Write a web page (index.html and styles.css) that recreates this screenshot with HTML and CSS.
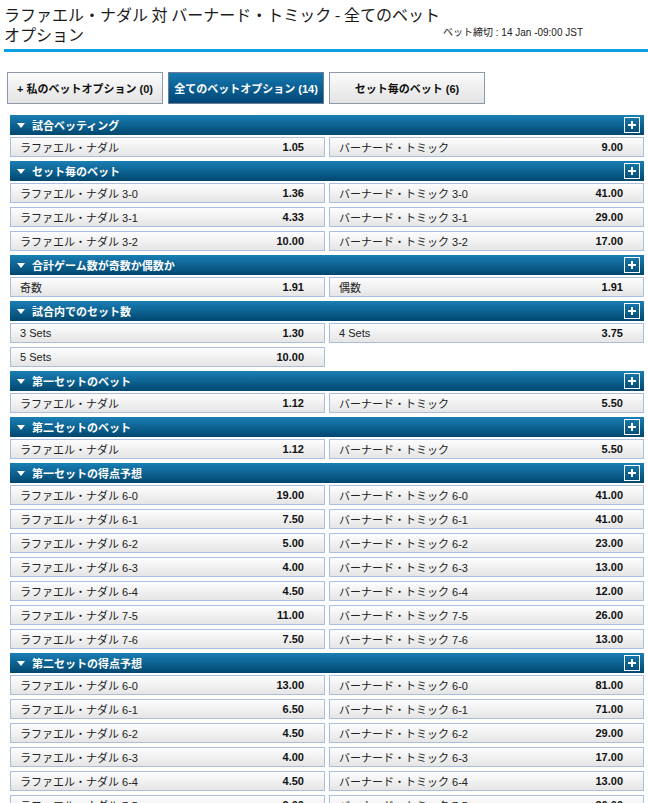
FILE: index.html
```html
<!DOCTYPE html>
<html lang="ja">
<head>
<meta charset="utf-8">
<title>ラファエル・ナダル 対 バーナード・トミック</title>
<link rel="stylesheet" href="styles.css">
</head>
<body>
<div class="titlebar">
  <h1 class="title">ラファエル・ナダル 対 バーナード・トミック - 全てのベットオプション</h1>
  <div class="deadline">ベット締切 : 14 Jan -09:00 JST</div>
</div>

<div class="tabs">
  <div class="tab">+ 私のベットオプション (0)</div>
  <div class="tab active">全てのベットオプション (14)</div>
  <div class="tab">セット毎のベット (6)</div>
</div>

<div class="markets">
  <div class="market">
    <div class="mhead"><span class="tri"></span><span class="mname">試合ベッティング</span><span class="plus"></span></div>
    <div class="grid">
      <div class="cell"><span>ラファエル・ナダル</span><b>1.05</b></div>
      <div class="cell"><span>バーナード・トミック</span><b>9.00</b></div>
    </div>
  </div>

  <div class="market">
    <div class="mhead"><span class="tri"></span><span class="mname">セット毎のベット</span><span class="plus"></span></div>
    <div class="grid">
      <div class="cell"><span>ラファエル・ナダル 3-0</span><b>1.36</b></div>
      <div class="cell"><span>バーナード・トミック 3-0</span><b>41.00</b></div>
      <div class="cell"><span>ラファエル・ナダル 3-1</span><b>4.33</b></div>
      <div class="cell"><span>バーナード・トミック 3-1</span><b>29.00</b></div>
      <div class="cell"><span>ラファエル・ナダル 3-2</span><b>10.00</b></div>
      <div class="cell"><span>バーナード・トミック 3-2</span><b>17.00</b></div>
    </div>
  </div>

  <div class="market">
    <div class="mhead"><span class="tri"></span><span class="mname">合計ゲーム数が奇数か偶数か</span><span class="plus"></span></div>
    <div class="grid">
      <div class="cell"><span>奇数</span><b>1.91</b></div>
      <div class="cell"><span>偶数</span><b>1.91</b></div>
    </div>
  </div>

  <div class="market">
    <div class="mhead"><span class="tri"></span><span class="mname">試合内でのセット数</span><span class="plus"></span></div>
    <div class="grid">
      <div class="cell"><span>3 Sets</span><b>1.30</b></div>
      <div class="cell"><span>4 Sets</span><b>3.75</b></div>
      <div class="cell"><span>5 Sets</span><b>10.00</b></div>
    </div>
  </div>

  <div class="market">
    <div class="mhead"><span class="tri"></span><span class="mname">第一セットのベット</span><span class="plus"></span></div>
    <div class="grid">
      <div class="cell"><span>ラファエル・ナダル</span><b>1.12</b></div>
      <div class="cell"><span>バーナード・トミック</span><b>5.50</b></div>
    </div>
  </div>

  <div class="market">
    <div class="mhead"><span class="tri"></span><span class="mname">第二セットのベット</span><span class="plus"></span></div>
    <div class="grid">
      <div class="cell"><span>ラファエル・ナダル</span><b>1.12</b></div>
      <div class="cell"><span>バーナード・トミック</span><b>5.50</b></div>
    </div>
  </div>

  <div class="market">
    <div class="mhead"><span class="tri"></span><span class="mname">第一セットの得点予想</span><span class="plus"></span></div>
    <div class="grid">
      <div class="cell"><span>ラファエル・ナダル 6-0</span><b>19.00</b></div>
      <div class="cell"><span>バーナード・トミック 6-0</span><b>41.00</b></div>
      <div class="cell"><span>ラファエル・ナダル 6-1</span><b>7.50</b></div>
      <div class="cell"><span>バーナード・トミック 6-1</span><b>41.00</b></div>
      <div class="cell"><span>ラファエル・ナダル 6-2</span><b>5.00</b></div>
      <div class="cell"><span>バーナード・トミック 6-2</span><b>23.00</b></div>
      <div class="cell"><span>ラファエル・ナダル 6-3</span><b>4.00</b></div>
      <div class="cell"><span>バーナード・トミック 6-3</span><b>13.00</b></div>
      <div class="cell"><span>ラファエル・ナダル 6-4</span><b>4.50</b></div>
      <div class="cell"><span>バーナード・トミック 6-4</span><b>12.00</b></div>
      <div class="cell"><span>ラファエル・ナダル 7-5</span><b>11.00</b></div>
      <div class="cell"><span>バーナード・トミック 7-5</span><b>26.00</b></div>
      <div class="cell"><span>ラファエル・ナダル 7-6</span><b>7.50</b></div>
      <div class="cell"><span>バーナード・トミック 7-6</span><b>13.00</b></div>
    </div>
  </div>

  <div class="market">
    <div class="mhead"><span class="tri"></span><span class="mname">第二セットの得点予想</span><span class="plus"></span></div>
    <div class="grid">
      <div class="cell"><span>ラファエル・ナダル 6-0</span><b>13.00</b></div>
      <div class="cell"><span>バーナード・トミック 6-0</span><b>81.00</b></div>
      <div class="cell"><span>ラファエル・ナダル 6-1</span><b>6.50</b></div>
      <div class="cell"><span>バーナード・トミック 6-1</span><b>71.00</b></div>
      <div class="cell"><span>ラファエル・ナダル 6-2</span><b>4.50</b></div>
      <div class="cell"><span>バーナード・トミック 6-2</span><b>29.00</b></div>
      <div class="cell"><span>ラファエル・ナダル 6-3</span><b>4.00</b></div>
      <div class="cell"><span>バーナード・トミック 6-3</span><b>17.00</b></div>
      <div class="cell"><span>ラファエル・ナダル 6-4</span><b>4.50</b></div>
      <div class="cell"><span>バーナード・トミック 6-4</span><b>13.00</b></div>
      <div class="cell"><span>ラファエル・ナダル 7-5</span><b>9.00</b></div>
      <div class="cell"><span>バーナード・トミック 7-5</span><b>26.00</b></div>
    </div>
  </div>
</div>
</body>
</html>
```
FILE: styles.css
```css
html, body {
  margin: 0;
  padding: 0;
  background: #ffffff;
}

body {
  font-family: "Liberation Sans", "Noto Sans CJK JP", sans-serif;
  color: #222222;
  font-size: 11px;
}

.titlebar {
  display: flex;
  align-items: flex-end;
  margin-left: 4px;
  padding: 4px 0 5px 0;
  border-bottom: 3px solid #0ba0e2;
}

.title {
  margin: 0;
  width: 440px;
  font-family: "Noto Sans CJK JP", sans-serif;
  font-weight: normal;
  font-size: 16px;
  line-height: 20px;
  color: #1a1a1a;
}

.deadline {
  margin-left: -1px;
  margin-bottom: 5px;
  font-size: 10px;
  line-height: 12px;
  color: #222222;
  font-family: "Liberation Sans", "Noto Sans CJK JP", sans-serif;
}

.tabs {
  display: flex;
  gap: 5px;
  margin: 20px 0 0 7px;
}

.tab {
  box-sizing: border-box;
  width: 156px;
  height: 32px;
  border: 1px solid #8d99ab;
  background: linear-gradient(#fbfbfb, #e3e3e3);
  display: flex;
  align-items: center;
  justify-content: center;
  font-weight: bold;
  font-size: 11px;
  color: #111111;
}

.tab.active {
  background: linear-gradient(#1779b1, #004675);
  border-color: #6b7e96;
  color: #ffffff;
}

.markets {
  margin: 11px 0 0 10px;
  width: 634px;
}

.mhead {
  height: 20px;
  margin-bottom: 2px;
  display: flex;
  align-items: center;
  background: linear-gradient(#1b7fb5, #00476f);
  color: #ffffff;
  font-weight: bold;
  font-size: 11px;
}

.tri {
  width: 0;
  height: 0;
  margin-left: 7px;
  border-left: 4px solid transparent;
  border-right: 4px solid transparent;
  border-top: 5px solid #ffffff;
}

.mname {
  margin-left: 7px;
  flex: 1;
}

.plus {
  position: relative;
  box-sizing: border-box;
  width: 16px;
  height: 16px;
  margin-right: 4px;
  border: 1px solid #ffffff;
}

.plus::before,
.plus::after {
  content: "";
  position: absolute;
  background: #ffffff;
}

.plus::before {
  left: 3px;
  top: 6px;
  width: 8px;
  height: 2px;
}

.plus::after {
  left: 6px;
  top: 3px;
  width: 2px;
  height: 8px;
}

.grid {
  display: grid;
  grid-template-columns: 1fr 1fr;
  column-gap: 4px;
}

.cell {
  box-sizing: border-box;
  height: 20px;
  margin-bottom: 4px;
  padding: 0 20px 0 9px;
  border: 1px solid #a9bfdd;
  background: linear-gradient(#fdfdfd, #e5e5e5);
  display: flex;
  align-items: center;
  justify-content: space-between;
  font-size: 11px;
  color: #222222;
}

.cell b {
  color: #111111;
  font-weight: bold;
}
```
